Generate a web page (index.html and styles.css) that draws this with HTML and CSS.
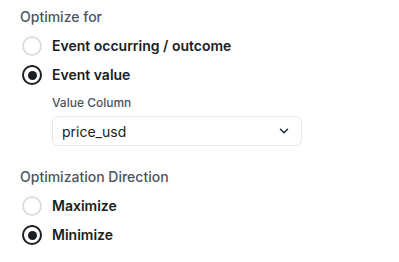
FILE: index.html
```html
<!DOCTYPE html>
<html>
<head>
<meta charset="utf-8">
<link rel="stylesheet" href="styles.css">
</head>
<body>
<div class="panel">
  <div class="group">
    <div class="title">Optimize for</div>
    <div class="options">
      <label class="option"><span class="radio"></span><span class="label">Event occurring / outcome</span></label>
      <label class="option"><span class="radio checked"></span><span class="label">Event value</span></label>
    </div>
    <div class="sub">
      <div class="sub-title">Value Column</div>
      <div class="select">
        <span class="select-value">price_usd</span>
        <svg class="chev" width="10" height="6" viewBox="0 0 10 6"><path d="M1.5 1.2 L5 4.7 L8.5 1.2" fill="none" stroke="#1f2937" stroke-width="1.5" stroke-linecap="round" stroke-linejoin="round"/></svg>
      </div>
    </div>
  </div>
  <div class="group second">
    <div class="title">Optimization Direction</div>
    <div class="options">
      <label class="option"><span class="radio"></span><span class="label">Maximize</span></label>
      <label class="option"><span class="radio checked"></span><span class="label">Minimize</span></label>
    </div>
  </div>
</div>
</body>
</html>
```
FILE: styles.css
```css
* { box-sizing: border-box; }
html, body { margin: 0; padding: 0; background: #fff; }
body { font-family: Inter, "Noto Sans", sans-serif; }
.panel { padding: 7px 20px 0 20px; display: flex; flex-direction: column; }
.group { display: flex; flex-direction: column; }
.group.second { margin-top: 21px; }
.title { font-size: 14px; line-height: 20px; font-weight: 500; color: #4b5563; }
.options { display: flex; flex-direction: column; gap: 9px; margin-top: 9px; }
.option { display: flex; align-items: center; height: 20px; }
.radio { width: 20px; height: 20px; border-radius: 50%; border: 2px solid #dedede; margin-left: 2px; margin-right: 10px; display: flex; align-items: center; justify-content: center; flex: none; }
.radio.checked { border: 2.5px solid #1a1d21; }
.radio.checked::after { content: ""; width: 9px; height: 9px; border-radius: 50%; background: #1a1d21; }
.label { font-size: 14px; line-height: 20px; font-weight: 600; color: #1a1d21; }
.sub { margin-left: 32px; margin-top: 10px; display: flex; flex-direction: column; }
.sub-title { font-size: 12px; line-height: 16px; font-weight: 500; color: #4b5563; }
.select { margin-top: 5px; width: 250px; height: 30px; border: 1px solid #e5e7eb; border-radius: 6px; display: flex; align-items: center; justify-content: space-between; padding: 0 12px 0 9px; }
.select-value { font-size: 14px; color: #1a1d21; }
.chev { display: block; }
```
